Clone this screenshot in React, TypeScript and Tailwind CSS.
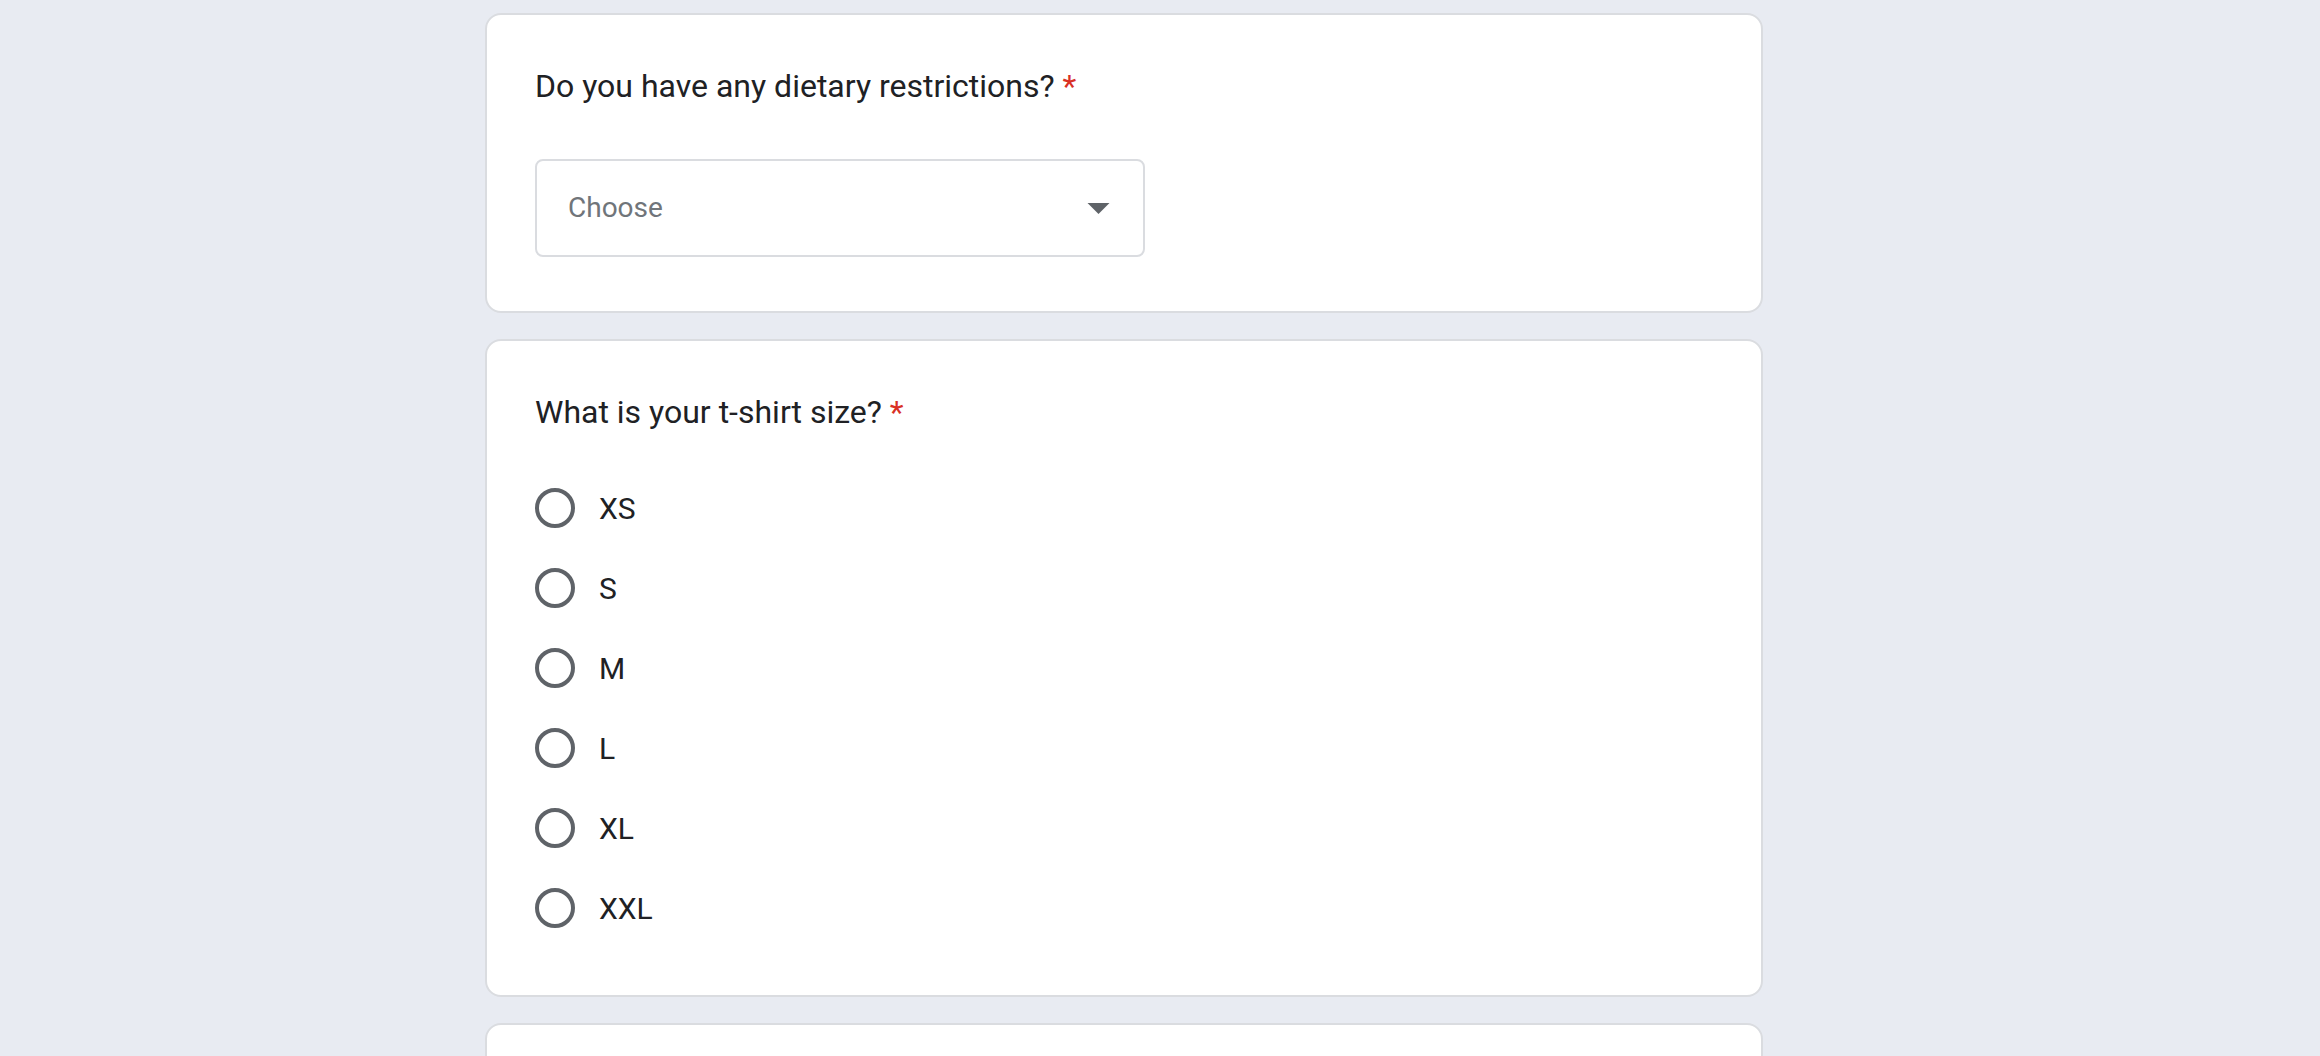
import React from "react";

const sizes = ["XS", "S", "M", "L", "XL", "XXL"];

function Title({ text }: { text: string }) {
  return (
    <div className="text-[32px] leading-[48px] text-[#202124] font-normal">
      {text}
      <span className="text-[#d93025]"> *</span>
    </div>
  );
}

export default function App() {
  return (
    <div
      className="min-h-screen bg-[#e8ebf2] pt-[13px] overflow-hidden"
      style={{ fontFamily: "Roboto, 'Noto Sans', sans-serif", height: 1056 }}
    >
      <div className="ml-[485px] w-[1278px] flex flex-col gap-[26px]">
        {/* Card 1 */}
        <div className="rounded-[16px] border-2 border-[#dadce0] bg-white pt-[47px] pb-[54px] px-[48px]">
          <Title text="Do you have any dietary restrictions?" />
          <div className="mt-[49px] w-[610px] h-[98px] border-2 border-[#dadce0] rounded-[8px] flex items-center justify-between pl-[31px] pr-[33px]">
            <span className="text-[28px] text-[#70757a]">Choose</span>
            <svg width="23" height="11" viewBox="0 0 10 5" className="block">
              <path d="M0 0l5 5 5-5z" fill="#5f6368" />
            </svg>
          </div>
        </div>

        {/* Card 2 */}
        <div className="rounded-[16px] border-2 border-[#dadce0] bg-white pt-[47px] pb-[47px] px-[48px]">
          <Title text="What is your t-shirt size?" />
          <div className="mt-[32px] flex flex-col">
            {sizes.map((s) => (
              <div key={s} className="h-[80px] flex items-center gap-[24px]">
                <div className="w-[40px] h-[40px] rounded-full border-4 border-[#5f6368] shrink-0" />
                <span className="text-[30px] text-[#202124]">{s}</span>
              </div>
            ))}
          </div>
        </div>

        {/* Card 3 */}
        <div className="rounded-[16px] border-2 border-[#dadce0] bg-white h-[300px]" />
      </div>
    </div>
  );
}
